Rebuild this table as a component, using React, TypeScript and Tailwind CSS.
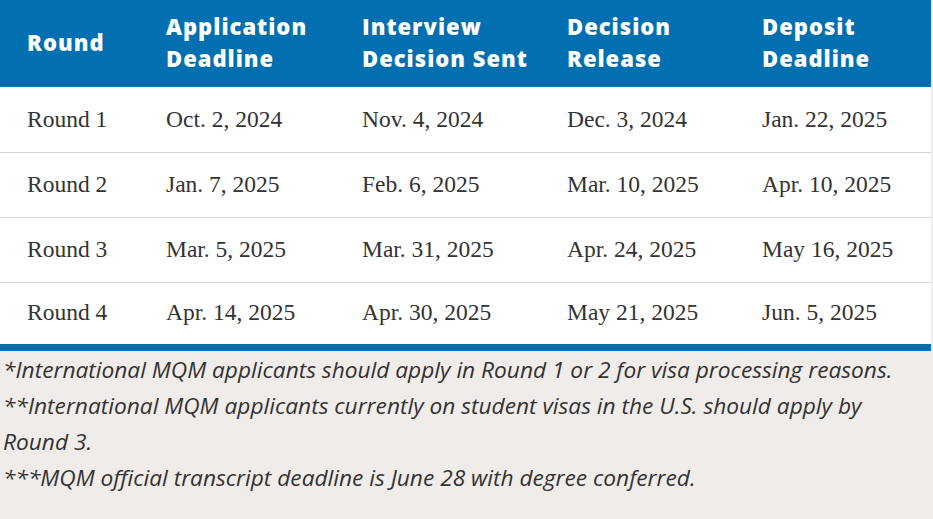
import React from "react"

const rows = [
  ["Round 1", "Oct. 2, 2024", "Nov. 4, 2024", "Dec. 3, 2024", "Jan. 22, 2025"],
  ["Round 2", "Jan. 7, 2025", "Feb. 6, 2025", "Mar. 10, 2025", "Apr. 10, 2025"],
  ["Round 3", "Mar. 5, 2025", "Mar. 31, 2025", "Apr. 24, 2025", "May 16, 2025"],
  ["Round 4", "Apr. 14, 2025", "Apr. 30, 2025", "May 21, 2025", "Jun. 5, 2025"],
]

const headers = [
  ["Round"],
  ["Application", "Deadline"],
  ["Interview", "Decision Sent"],
  ["Decision", "Release"],
  ["Deposit", "Deadline"],
]

export default function App() {
  return (
    <div className="min-h-screen w-[933px] bg-[#f0ece9]">
      <div className="w-[931px]">
        <table className="w-full table-fixed border-collapse border-b-[7px] border-[#0270b0] bg-white">
          <colgroup>
            <col className="w-[139px]" />
            <col className="w-[196px]" />
            <col className="w-[205px]" />
            <col className="w-[195px]" />
            <col className="w-[196px]" />
          </colgroup>
          <thead>
            <tr className="h-[87px] bg-[#0270b0]">
              {headers.map((h, i) => (
                <th
                  key={i}
                  className="pl-[27px] pb-[4px] text-left align-middle font-['Open_Sans',sans-serif] text-[22px] font-extrabold leading-[32px] tracking-[1px] text-white"
                >
                  {h.map((line) => (
                    <div key={line} className="whitespace-nowrap">{line}</div>
                  ))}
                </th>
              ))}
            </tr>
          </thead>
          <tbody>
            {rows.map((r, ri) => (
              <tr key={ri} className={ri < rows.length - 1 ? "h-[65px] border-b border-[#d8d4ce]" : "h-[65px]"}>
                {r.map((c, ci) => (
                  <td
                    key={ci}
                    className="pl-[27px] align-middle whitespace-nowrap font-['Liberation_Serif',serif] text-[23.5px] text-[#333333]"
                  >
                    {c}
                  </td>
                ))}
              </tr>
            ))}
          </tbody>
        </table>
        <div className="pl-[3px] pt-[1px] font-['Open_Sans',sans-serif] text-[22.7px] italic leading-[36px] text-[#333333]">
          <p>*International MQM applicants should apply in Round 1 or 2 for visa processing reasons.</p>
          <p>**International MQM applicants currently on student visas in the U.S. should apply by Round 3.</p>
          <p>***MQM official transcript deadline is June 28 with degree conferred.</p>
        </div>
      </div>
    </div>
  )
}
